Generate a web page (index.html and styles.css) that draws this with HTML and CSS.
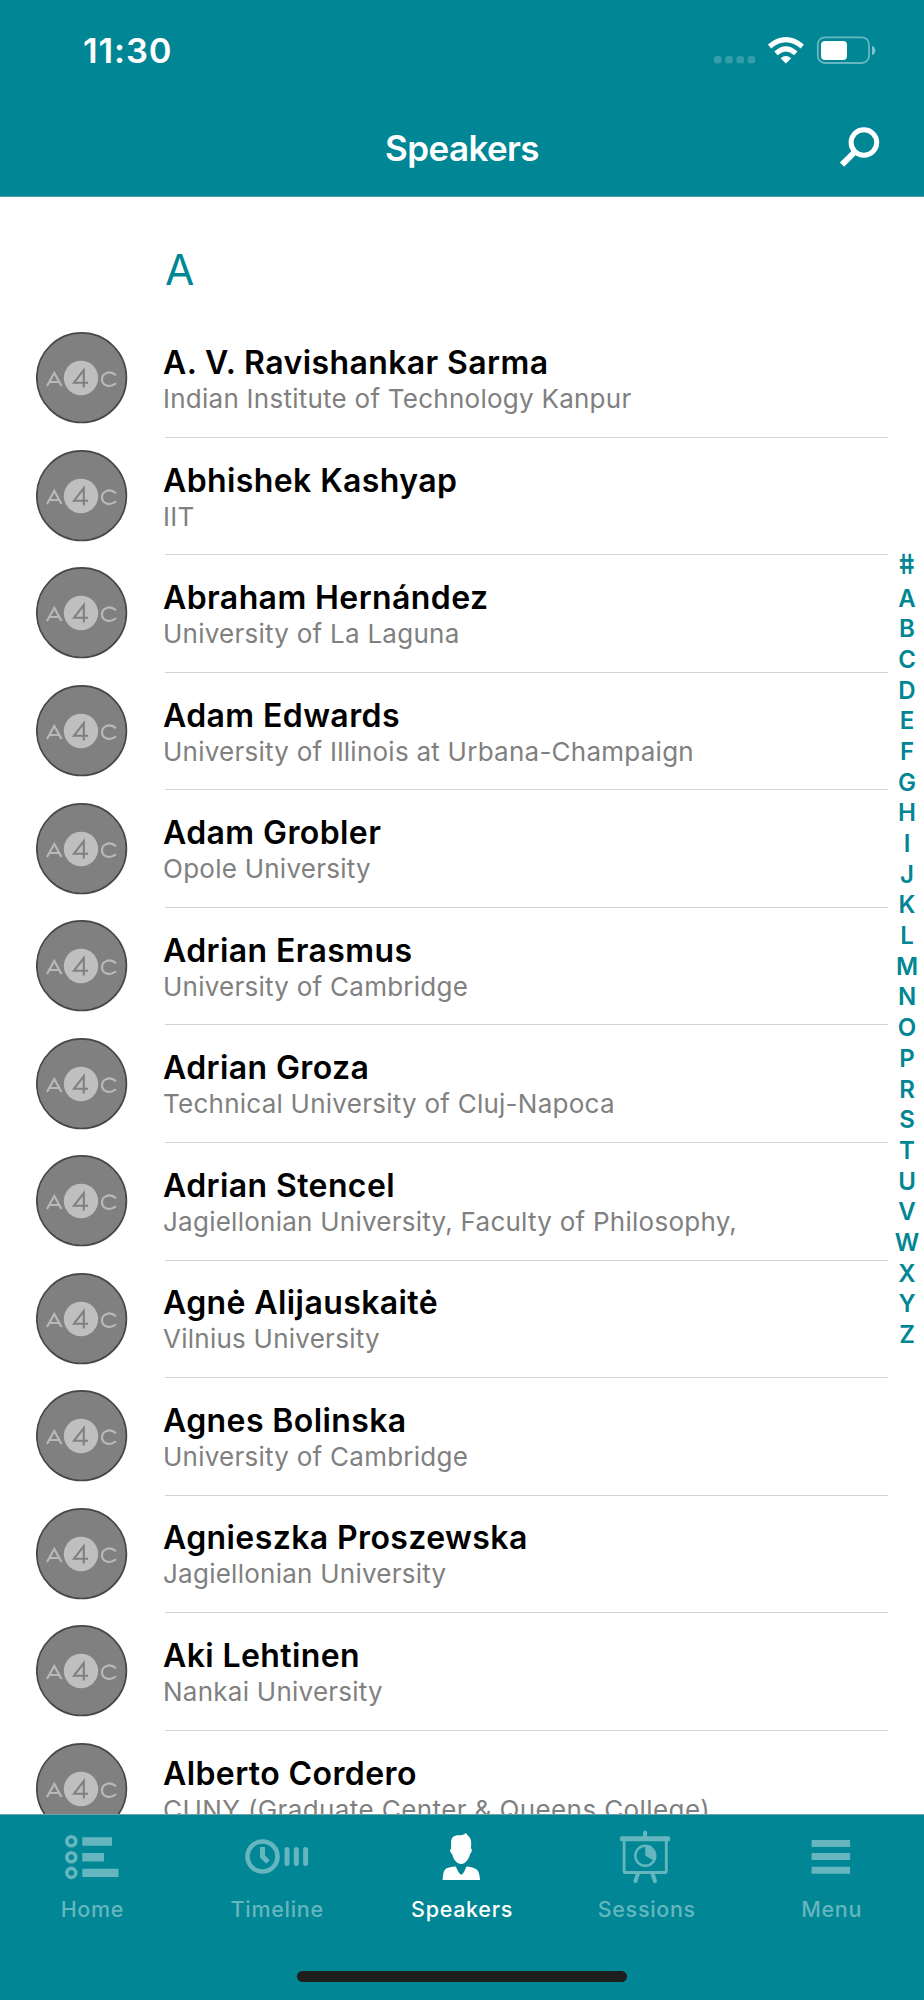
FILE: index.html
```
<!DOCTYPE html>
<html lang="en">
<head>
<meta charset="utf-8">
<title>Speakers</title>
<link rel="stylesheet" href="styles.css">
</head>
<body>
<svg class="defs" width="0" height="0" aria-hidden="true">
  <symbol id="badge" viewBox="0 0 92 92">
    <circle cx="45.600" cy="45.700" r="44.8" fill="#808080" stroke="#474747" stroke-width="1.7"/>
    <circle cx="45" cy="46" r="17.2" fill="#bfbfbf"/>
    <g fill="none" stroke-width="2.1" transform="translate(-0.500 0)">
      <path d="M11.5 54 18.8 41 26 54M14.5 50H23" stroke="#b9b9b9"/>
      <path d="M80.5 43.2C74 37.500 66.500 41.500 66.500 47.200C66.500 53 74 56.800 80.500 51.300" stroke="#b9b9b9"/>
      <path d="M48.300 55.500V38L38.500 50.700H52.500" stroke="#808080"/>
    </g>
  </symbol>
</svg>
<div class="phone">
  <header class="top">
    <div class="status">
      <span class="time">11:30</span>
      <svg class="indicators" width="164" height="30" viewBox="0 0 164 30">
        <g fill="#fff" opacity=".2">
          <rect x="0" y="20" width="7.600" height="7.300" rx="2.600"/><rect x="11.200" y="20" width="7.600" height="7.300" rx="2.600"/><rect x="22.400" y="20" width="7.600" height="7.300" rx="2.600"/><rect x="33.600" y="20" width="7.600" height="7.300" rx="2.600"/>
        </g>
        <g fill="none" stroke="#fff" stroke-width="5">
          <path d="M55.500 10.500Q71.900 -3.100 88.300 10.500"/>
          <path d="M62 17.300Q71.900 8.500 81.800 17.300"/>
        </g>
        <path d="M66.600 22.300Q71.900 17.700 77.200 22.300L71.900 27.500Z" fill="#fff"/>
        <rect x="103.800" y="1.300" width="51.200" height="25.700" rx="7" fill="none" stroke="#fff" stroke-opacity=".4" stroke-width="1.800"/>
        <rect x="107" y="5" width="26" height="19" rx="4" fill="#fff"/>
        <path d="M158 9.800C162.500 11.500 162.500 17.500 158 19.200Z" fill="#fff" fill-opacity=".5"/>
      </svg>
    </div>
    <div class="nav">
      <h1 class="title">Speakers</h1>
      <svg class="search" width="42" height="42" viewBox="0 0 42 42" fill="none" stroke="#fff">
        <circle cx="25.900" cy="16.500" r="12.800" stroke-width="5"/>
        <path d="M17.200 25.500 4 38.700" stroke-width="6"/>
      </svg>
    </div>
  </header>
  <main class="content">
    <h2 class="letter">A</h2>
    <ul class="list">
      <li class="row"><svg class="avatar"><use href="#badge"/></svg><div class="info"><b class="name">A. V. Ravishankar Sarma</b><span class="org">Indian Institute of Technology Kanpur</span></div></li>
      <li class="row"><svg class="avatar"><use href="#badge"/></svg><div class="info"><b class="name">Abhishek Kashyap</b><span class="org">IIT</span></div></li>
      <li class="row"><svg class="avatar"><use href="#badge"/></svg><div class="info"><b class="name">Abraham Hernández</b><span class="org">University of La Laguna</span></div></li>
      <li class="row"><svg class="avatar"><use href="#badge"/></svg><div class="info"><b class="name">Adam Edwards</b><span class="org">University of Illinois at Urbana-Champaign</span></div></li>
      <li class="row"><svg class="avatar"><use href="#badge"/></svg><div class="info"><b class="name">Adam Grobler</b><span class="org">Opole University</span></div></li>
      <li class="row"><svg class="avatar"><use href="#badge"/></svg><div class="info"><b class="name">Adrian Erasmus</b><span class="org">University of Cambridge</span></div></li>
      <li class="row"><svg class="avatar"><use href="#badge"/></svg><div class="info"><b class="name">Adrian Groza</b><span class="org">Technical University of Cluj-Napoca</span></div></li>
      <li class="row"><svg class="avatar"><use href="#badge"/></svg><div class="info"><b class="name">Adrian Stencel</b><span class="org">Jagiellonian University, Faculty of Philosophy,</span></div></li>
      <li class="row"><svg class="avatar"><use href="#badge"/></svg><div class="info"><b class="name">Agnė Alijauskaitė</b><span class="org">Vilnius University</span></div></li>
      <li class="row"><svg class="avatar"><use href="#badge"/></svg><div class="info"><b class="name">Agnes Bolinska</b><span class="org">University of Cambridge</span></div></li>
      <li class="row"><svg class="avatar"><use href="#badge"/></svg><div class="info"><b class="name">Agnieszka Proszewska</b><span class="org">Jagiellonian University</span></div></li>
      <li class="row"><svg class="avatar"><use href="#badge"/></svg><div class="info"><b class="name">Aki Lehtinen</b><span class="org">Nankai University</span></div></li>
      <li class="row"><svg class="avatar"><use href="#badge"/></svg><div class="info"><b class="name">Alberto Cordero</b><span class="org wide">CUNY (Graduate Center &amp; Queens College)</span></div></li>
    </ul>
    <nav class="index">
      <span class="hash">#</span><span>A</span><span>B</span><span>C</span><span>D</span><span>E</span><span>F</span><span>G</span><span>H</span><span>I</span><span>J</span><span>K</span><span>L</span><span>M</span><span>N</span><span>O</span><span>P</span><span>R</span><span>S</span><span>T</span><span>U</span><span>V</span><span>W</span><span>X</span><span>Y</span><span>Z</span>
    </nav>
  </main>
  <footer class="bottom">
    <nav class="tabs">
      <a class="tab">
        <svg class="icon" viewBox="0 0 64 64">
          <g fill="none" stroke="currentColor" stroke-width="3.600"><circle cx="11.300" cy="21.300" r="4.500"/><circle cx="11.300" cy="37.200" r="4.500"/><circle cx="11.300" cy="52.900" r="4.500"/></g>
          <path fill="currentColor" d="M22.300 17.300H52v8.400H22.300zM22.300 33H44v8.400H22.300zM22.300 48.700H58.500v8.400H22.300z"/>
        </svg>
        <span class="label">Home</span>
      </a>
      <a class="tab">
        <svg class="icon" viewBox="0 0 64 64" fill="none" stroke="currentColor">
          <circle cx="17.500" cy="36.500" r="15" stroke-width="4.600"/>
          <path d="M17.500 27V36.500L23 42" stroke-width="5"/>
          <path d="M42 29.500V43.500M51.300 29.500V43.500M60.600 29.500V43.500" stroke-width="5" stroke-linecap="round"/>
        </svg>
        <span class="label">Timeline</span>
      </a>
      <a class="tab active">
        <svg class="icon" viewBox="0.700 0 64 64" fill="currentColor">
          <path d="M21.800 22C22 17 25 15 30 15.300C34 15.200 35 14 36.300 13.300C37.500 13.500 37.800 14.500 38.500 15.500C42 18 42.400 22 41.600 28.500C43.300 28.500 42.600 32.500 40.800 34C39.500 39.500 36 43.800 32 44C27.500 43.800 24 39.500 23 34.500C21 32.500 19.800 29.500 21.800 29Z"/>
          <path d="M13.300 60C14 51 15 48.500 20 47.500Q23 46.600 26.500 46.500Q29.500 54 32 54.700Q34.500 54 37 46.500Q40 46.600 43 47.500C49 49 50 52 50.800 60Z"/>
        </svg>
        <span class="label">Speakers</span>
      </a>
      <a class="tab">
        <svg class="icon" viewBox="1.200 0 64 64" fill="none" stroke="currentColor">
          <path d="M31.300 12.500V17" stroke-width="4" stroke-linecap="round"/>
          <rect x="6.300" y="16.200" width="50" height="5" rx="1.500" fill="currentColor" stroke="none"/>
          <path d="M10.300 20V51.800Q10.300 52.500 11 52.500H51.800Q52.500 52.500 52.500 51.800V20" stroke-width="2.800"/>
          <path d="M24.300 53 21.700 61.200M38.500 53 41.200 61.200" stroke-width="4" stroke-linecap="round"/>
          <circle cx="31.500" cy="35.800" r="10" stroke-width="2.400"/>
          <path d="M31.500 35.800V25A10.800 10.800 0 0 1 40.800 41Z" fill="currentColor" stroke="none"/>
        </svg>
        <span class="label">Sessions</span>
      </a>
      <a class="tab">
        <svg class="icon" viewBox="1.200 0 64 64" fill="currentColor"><path d="M12.800 20H51.300v7H12.800zM12.800 33H51.300v7H12.800zM12.800 46.700H51.300v7H12.800z"/></svg>
        <span class="label">Menu</span>
      </a>
    </nav>
    <div class="home-bar"></div>
  </footer>
</div>
</body>
</html>
```
FILE: styles.css
```
* { box-sizing: border-box; }
body { margin: 0; background: #fff; font-family: Inter, "Liberation Sans", sans-serif; }
.defs { position: absolute; }
.phone { width: 924px; height: 2000px; display: flex; flex-direction: column; overflow: hidden; }
.top { height: 197px; flex: none; background: #008694; color: #fff; border-bottom: 1px solid #4d9da6; }
.status { height: 100px; padding: 30px 46px 0 83px; display: flex; justify-content: space-between; }
.time { font-size: 34.500px; font-weight: 600; line-height: 42px; letter-spacing: 0.9px; }
.indicators { margin-top: 6px; }
.nav { display: grid; grid-template-columns: 90px 1fr 86px; align-items: start; padding-top: 23px; }
.title { grid-column: 2; margin: 0 4px 0 0; text-align: center; font-size: 35px; font-weight: 600; line-height: 50px; letter-spacing: -0.600px; }
.search { margin-left: 0; margin-top: 3px; }
.content { position: relative; flex: 1; min-height: 0; overflow: hidden; }
.letter { margin: 0; padding: 46px 0 0 165px; height: 123.200px; font-size: 42.500px; font-weight: 400; line-height: 54px; color: #008694; }
.list { margin: 0; padding: 0 36px 0 35.500px; list-style: none; }
.row { height: 117.550px; display: flex; gap: 37.500px; }
.avatar { width: 92px; height: 92px; margin-top: 12.200px; flex: none; }
.info { flex: 1; padding-top: 22.800px; border-bottom: 1px solid #d4d4d4; display: flex; flex-direction: column; white-space: nowrap; }
.name { font-size: 32px; font-weight: 600; line-height: 40px; color: #000; letter-spacing: 0.400px; margin-left: -2px; }
.org { font-size: 26px; line-height: 32px; color: #808080; letter-spacing: 0.25px; margin-left: -2px; }
.org.wide { letter-spacing: 0.400px; }
.index { position: absolute; right: 0; top: 348.500px; width: 34px; display: flex; flex-direction: column; text-align: center; color: #008694; font-size: 24px; font-weight: 600; line-height: 30.690px; }
.index span { height: 30.690px; }
.index .hash { height: 38px; line-height: 37px; font-size: 28px; font-weight: 600; transform: skewX(9deg) scaleX(0.87); }
.bottom { height: 186px; flex: none; background: #008694; border-top: 1px solid #6ba1a7; color: #fff; }
.tabs { display: grid; grid-template-columns: repeat(5, 1fr); height: 156px; }
.tab { display: flex; flex-direction: column; align-items: center; color: #66b6bf; padding-top: 5px; }
.tab.active { color: #fff; }
.icon { width: 64px; height: 64px; }
.label { font-size: 21.500px; line-height: 30px; margin: 9.500px 0 0 0; font-weight: 500; letter-spacing: 0.7px; }
.home-bar { width: 330px; height: 11px; margin: 0 auto; border-radius: 6px; background: #1e1e1e; }
```
